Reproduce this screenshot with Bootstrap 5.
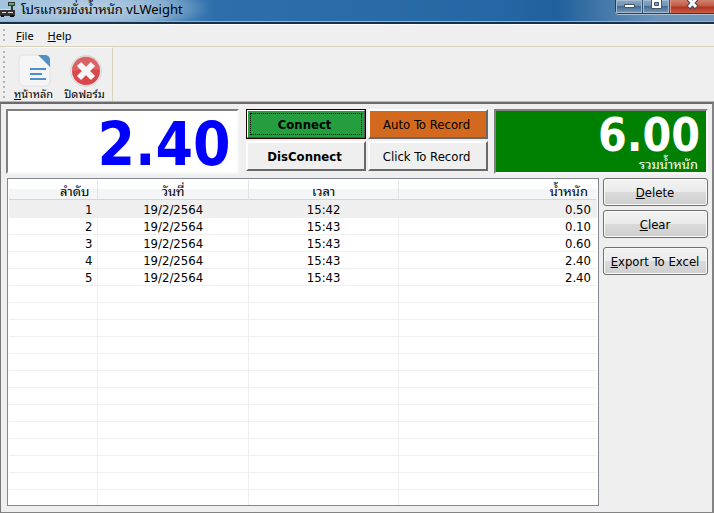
<!DOCTYPE html>
<html lang="th">
<head>
<meta charset="utf-8">
<meta name="viewport" content="width=device-width, initial-scale=1">
<title>โปรแกรมชั่งน้ำหนัก vLWeight</title>
<link href="https://cdn.jsdelivr.net/npm/bootstrap@5.3.0/dist/css/bootstrap.min.css" rel="stylesheet">
<style>
body{font:13px/17px "DejaVu Sans Condensed","Noto Sans Thai Looped","Waree","Loma","Garuda",sans-serif;color:#000;background:#efefef;cursor:default}
.title-bar{height:24px;border-bottom:2px solid #14304c;box-shadow:inset 0 -1px #8db4d4;background:radial-gradient(ellipse 120px 24px at 90px 8px,#c2d6e8dd 0,#b0cbe188 65%,transparent 100%),linear-gradient(90deg,#9dbfdb 0,#6f9fc7 18%,#2e6fab 30%,#2567a4 70%,#20609c 78%,#6c93b8 92%,#7397b9 100%)}
.title-text{font-family:"Noto Sans","Noto Sans Thai Looped","Waree","Loma","Garuda",sans-serif;font-size:13px;line-height:18px}
.win-controls{height:14px;border:1px solid #283f5c;border-top:0;border-right:0;border-bottom-left-radius:4px;box-shadow:0 1px #a9c0d6}
.win-btn{width:27px;border:0;border-right:1px solid #33506e;padding:0;background:linear-gradient(#8ba9c5 0,#6f91b1 45%,#456d94 50%,#7b9bba 100%);box-shadow:inset 0 0 0 1px #a3bad0;line-height:0}
.win-close{width:44px;background:linear-gradient(#d08371 0,#c45a43 45%,#b03620 55%,#c95c45 100%);box-shadow:inset 1px 0 #d99a8d;border-right:0}
.menu-strip{height:23px;border-top:1px solid #fff;border-bottom:1px solid #d8d2bd;padding-left:3px}
.menu-strip a,.tool-btn{color:#000;text-decoration:none;font-family:"Noto Sans","Noto Sans Thai Looped","Waree","Loma","Garuda",sans-serif}
.menu-strip a{font-size:11px;line-height:22px;margin-left:10px;margin-right:4px}
.grip{width:3px;margin:4px 0 2px;background:radial-gradient(circle at 1px 1px,#aaa 0,#bbb 1px,transparent 1px) 0 0/3px 5px}
.tool-strip{height:55px;border-bottom:1px solid #b8b8b4;padding-left:3px}
.tool-set{border-right:1px solid #d8d2bd;border-top:1px solid #faf9f4;padding:0 2px}
.tool-btn{width:51px;border:0;background:none;padding:5px 0 0;font-size:11px;line-height:13px;white-space:nowrap}
.tool-btn svg{display:block;margin:0 auto}
.client{border:2px solid #838383;border-left:1px solid #777;border-top:2px solid #6c6a6d;border-bottom-width:1px;padding:5px 4px 6px 5px;min-height:0}
.readout{height:65px;border:2px solid;border-color:#808080 #f8f8f8 #f8f8f8 #808080;background:#fff;color:#00f;font-weight:700;min-width:0}
.readout output{display:block}
.live{font-size:60px;line-height:66px;padding-right:6px;flex:233 1 0}
.total{background:green;color:#fff;font-size:46px;line-height:48px;padding-right:6px;flex:214 1 0;position:relative}
.total label{position:absolute;right:8px;bottom:0;font-size:13px;line-height:14px;font-weight:400}
.cmd-grid{display:grid;grid-template-columns:120px 120px;grid-auto-rows:30px;gap:2px;margin:0 6px 0 7px}
.cmd{border:2px solid;border-color:#fff #696969 #696969 #fff;background:#efefef;padding:0 2px 0 0;white-space:nowrap}
.cmd-on{background:#259e40;border-color:#fff #555 #555 #fff;outline:1px solid #200;outline-offset:-1px;position:relative}
.cmd-on::after{content:"";position:absolute;inset:2px;border:1px dotted #000}
.cmd-auto{background:#d2691e}
.lower{min-height:0;padding:4px 0 0 1px}
.list-box{border:1px solid #828790;background:#fff;padding:1px 1px 2px;overflow:hidden;min-width:0;min-height:0}
.log{width:100%;table-layout:fixed;border-collapse:separate;border-spacing:0;margin:0}
.log col.no{width:15.200%}
.log col.when{width:25.600%}
.log th{height:20px;padding:3px 8px 0;font-weight:400;line-height:15px;border-bottom:1px solid #d5d5d5;border-right:1px solid #e2e3e5;background:linear-gradient(#fff 45%,#f4f5f6 50%)}
.log td{height:17px;padding:2px 5px 0;line-height:14px;border-bottom:1px solid #efefef;border-right:1px solid #efefef}
.log th:last-child,.log td:last-child{border-right-color:transparent}
.log .picked td{background:#efefef;height:18px;padding-top:3px}
.side{width:105px;margin-left:4px}
.act{height:28px;border:1px solid #707070;border-radius:3px;box-shadow:inset 0 0 0 1px #fafafa;background:linear-gradient(#f2f2f2 0,#ebebeb 50%,#dadada 51%,#cfcfcf 100%);padding:0 1px 0 0;white-space:nowrap}
.act-export{margin-top:5px}
</style>
<script src="https://cdn.jsdelivr.net/npm/bootstrap@5.3.0/dist/js/bootstrap.bundle.min.js"></script>
</head>
<body class="vh-100 d-flex flex-column overflow-hidden">
<header class="title-bar d-flex justify-content-between align-items-start flex-shrink-0">
  <div class="d-flex gap-1">
    <svg width="17" height="18" viewBox="0 0 17 18" aria-hidden="true"><path d="M8 2h7v4H8z" fill="#333"/><path d="M9 3h5v2H9z" fill="#48b868"/><path d="M11 6h2v5h-2z" fill="#333"/><path d="M0 10h15v6H0z" fill="#343434"/><path d="M0 9h10v1H0zM2 12h4v1H2zM8 12h5v1H8z" fill="#ddd"/><path d="M1 15h3v2H1zM10 15h4v2h-4z" fill="#111"/></svg>
    <span class="title-text">โปรแกรมชั่งน้ำหนัก vLWeight</span>
  </div>
  <div class="win-controls d-flex">
    <button class="win-btn" type="button" aria-label="Minimize"><svg width="13" height="13"><path d="M1.500 4.500h10v3h-10z" fill="#fff" stroke="#45556a"/></svg></button>
    <button class="win-btn" type="button" aria-label="Maximize"><svg width="13" height="13"><path d="M1.500-1.500h10v10h-10z" fill="#fff" stroke="#45556a"/><path d="M4.500 2.500h4v3h-4z" fill="#7fa0c0" stroke="#45556a"/></svg></button>
    <button class="win-btn win-close" type="button" aria-label="Close"><svg width="13" height="13"><path d="M2.500-1.500 10.500 7.500M10.500-1.500 2.500 7.500" stroke="#45455a" stroke-width="5"/><path d="M3-1 10 7M10-1 3 7" stroke="#fff" stroke-width="3"/></svg></button>
  </div>
</header>
<nav class="menu-strip d-flex flex-shrink-0">
  <span class="grip"></span>
  <a href="#"><u>F</u>ile</a>
  <a href="#"><u>H</u>elp</a>
</nav>
<div class="tool-strip d-flex flex-shrink-0">
  <span class="grip"></span>
  <div class="tool-set d-flex">
    <button class="tool-btn" type="button"><svg width="34" height="33" viewBox="0 0 34 33"><path d="M6 1h19l8 10v15q0 6-6 6H8q-6 0-6-6V7q0-6 4-6z" fill="#f5f5f5" stroke="#e2e2e2"/><path d="M21 1h8q4 1 4 5v7z" fill="#4f91c7"/><path d="M13 15h16M13 20h12M13 25h16" stroke="#4f8fca" stroke-width="2"/></svg><u>ห</u>น้าหลัก</button>
    <button class="tool-btn" type="button"><svg width="34" height="33" viewBox="0 0 34 33"><circle cx="18" cy="17" r="15.500" fill="#ececec" stroke="#d6d6d6"/><circle cx="18" cy="17" r="14" fill="#d8484c"/><path d="M4 17a14 14 0 0 1 28-1Q19 14 4 17z" fill="#e07377" opacity=".6"/><path d="M11 10l14 14M25 10l-14 14" stroke="#f7f7f7" stroke-width="6"/></svg>ปิดฟอร์ม</button>
  </div>
</div>
<main class="client d-flex flex-column flex-grow-1">
  <section class="d-flex flex-shrink-0">
    <div class="readout live text-end"><output>2.40</output></div>
    <div class="cmd-grid">
      <button class="cmd cmd-on fw-bold" type="button">Connect</button>
      <button class="cmd cmd-auto" type="button">Auto To Record</button>
      <button class="cmd fw-bold" type="button">DisConnect</button>
      <button class="cmd" type="button">Click To Record</button>
    </div>
    <div class="readout total text-end"><output id="sum">6.00</output><label for="sum">รวมน้ำหนัก</label></div>
  </section>
  <section class="lower d-flex flex-grow-1">
    <div class="list-box flex-grow-1">
      <table class="log">
        <colgroup><col class="no"><col class="when"><col class="when"><col></colgroup>
        <thead><tr><th class="text-end">ลำดับ</th><th class="text-center">วันที่</th><th class="text-center">เวลา</th><th class="text-end">น้ำหนัก</th></tr></thead>
        <tbody>
          <tr class="picked"><td class="text-end">1</td><td class="text-center">19/2/2564</td><td class="text-center">15:42</td><td class="text-end">0.50</td></tr>
          <tr><td class="text-end">2</td><td class="text-center">19/2/2564</td><td class="text-center">15:43</td><td class="text-end">0.10</td></tr>
          <tr><td class="text-end">3</td><td class="text-center">19/2/2564</td><td class="text-center">15:43</td><td class="text-end">0.60</td></tr>
          <tr><td class="text-end">4</td><td class="text-center">19/2/2564</td><td class="text-center">15:43</td><td class="text-end">2.40</td></tr>
          <tr><td class="text-end">5</td><td class="text-center">19/2/2564</td><td class="text-center">15:43</td><td class="text-end">2.40</td></tr>
          <tr><td></td><td></td><td></td><td></td></tr><tr><td></td><td></td><td></td><td></td></tr>
          <tr><td></td><td></td><td></td><td></td></tr><tr><td></td><td></td><td></td><td></td></tr>
          <tr><td></td><td></td><td></td><td></td></tr><tr><td></td><td></td><td></td><td></td></tr>
          <tr><td></td><td></td><td></td><td></td></tr><tr><td></td><td></td><td></td><td></td></tr>
          <tr><td></td><td></td><td></td><td></td></tr><tr><td></td><td></td><td></td><td></td></tr>
          <tr><td></td><td></td><td></td><td></td></tr><tr><td></td><td></td><td></td><td></td></tr>
          <tr><td></td><td></td><td></td><td></td></tr>
        </tbody>
      </table>
    </div>
    <div class="side d-flex flex-column gap-1 flex-shrink-0">
      <button class="act" type="button"><u>D</u>elete</button>
      <button class="act" type="button"><u>C</u>lear</button>
      <button class="act act-export" type="button"><u>E</u>xport To Excel</button>
    </div>
  </section>
</main>
</body>
</html>
